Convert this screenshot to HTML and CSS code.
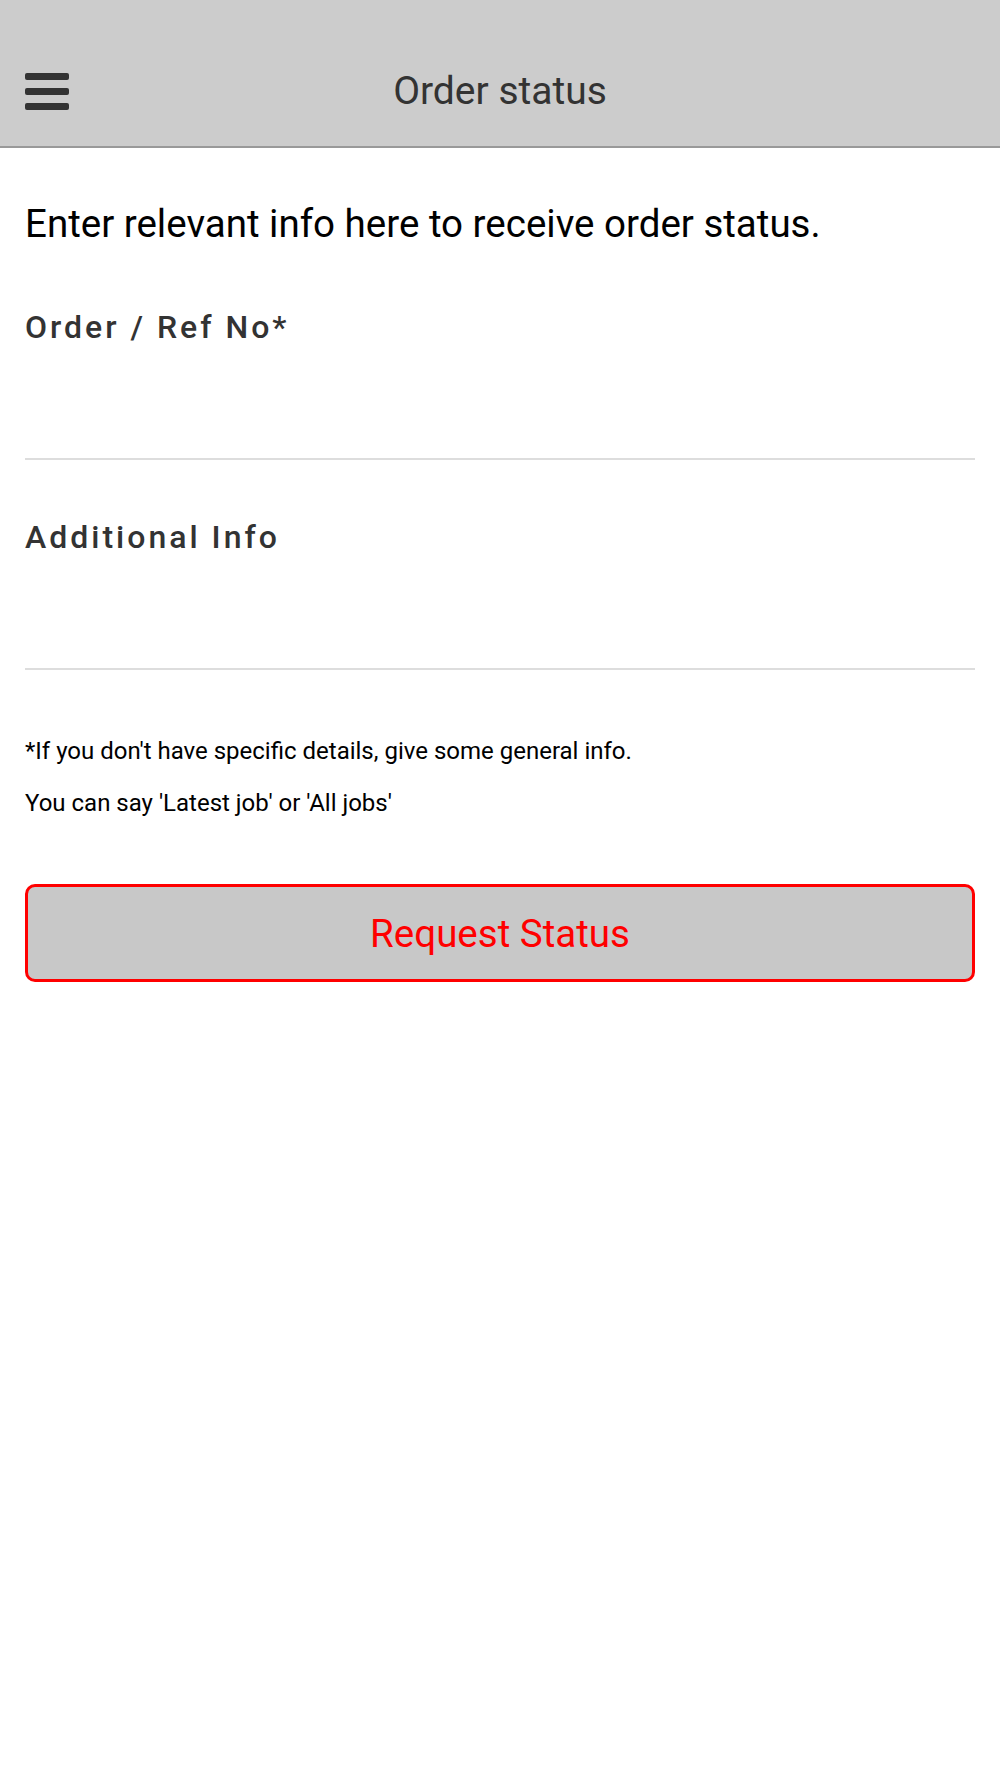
FILE: index.html
```html
<!doctype html>
<html>
  <head>
    <meta charset="utf-8" />
    <title>Order status</title>
    <link rel="stylesheet" href="styles.css">
  </head>
  <body>
    <header class="topbar">
      <button class="menu-btn" aria-label="Menu">
        <span></span>
        <span></span>
        <span></span>
      </button>
      <h1 class="title">Order status</h1>
    </header>

    <main class="content">
      <p class="intro">Enter relevant info here to receive order status.</p>

      <form class="status-form">
        <div class="field">
          <label for="order-ref">Order / Ref No*</label>
          <input type="text" id="order-ref" />
        </div>
        <div class="field">
          <label for="extra-info">Additional Info</label>
          <input type="text" id="extra-info" />
        </div>

        <div class="notes">
          <p>*If you don't have specific details, give some general info.</p>
          <p>You can say 'Latest job' or 'All jobs'</p>
        </div>

        <button type="button" class="submit-btn">Request Status</button>
      </form>
    </main>
  </body>
</html>
```

FILE: styles.css
```css
body {
  margin: 0;
  font-family: Roboto, "Noto Sans", sans-serif;
  background: #fff;
  color: #000;
}
.topbar {
  display: grid;
  grid-template-columns: 1fr auto 1fr;
  align-items: center;
  height: 110px;
  padding: 36px 25px 0;
  background-color: #cccccc;
  border-bottom: 2px solid #999;
}
.menu-btn {
  justify-self: start;
  display: flex;
  flex-direction: column;
  gap: 8px;
  padding: 0;
  border: none;
  background: none;
}
.menu-btn span {
  display: block;
  width: 44px;
  height: 7px;
  border-radius: 2px;
  background-color: #333;
}
.title {
  margin: 0;
  font-size: 39px;
  font-weight: 400;
  color: #333;
}
.content {
  padding: 0 25px;
}
.intro {
  margin: 53px 0 0;
  font-size: 38.5px;
  line-height: 45px;
}
.status-form {
  padding-top: 4px;
}
.field {
  margin-top: 58px;
}
.field label {
  display: block;
  font-size: 32px;
  line-height: 38px;
  font-weight: 500;
  letter-spacing: 3px;
  color: #333;
}
.field input {
  display: block;
  box-sizing: border-box;
  width: 100%;
  height: 114px;
  padding: 0;
  border: none;
  border-bottom: 2px solid #ddd;
  font: inherit;
  font-size: 32px;
  background: transparent;
  outline: none;
}
.notes {
  margin-top: 55px;
}
.notes p {
  margin: 0;
  font-size: 24px;
  line-height: 52px;
}
.submit-btn {
  display: block;
  box-sizing: border-box;
  width: 100%;
  height: 98px;
  margin-top: 55px;
  border: 3px solid #ff0000;
  border-radius: 10px;
  background-color: #c8c8c8;
  color: #ff0000;
  font-family: Roboto, "Noto Sans", sans-serif;
  font-size: 38.5px;
}
```
